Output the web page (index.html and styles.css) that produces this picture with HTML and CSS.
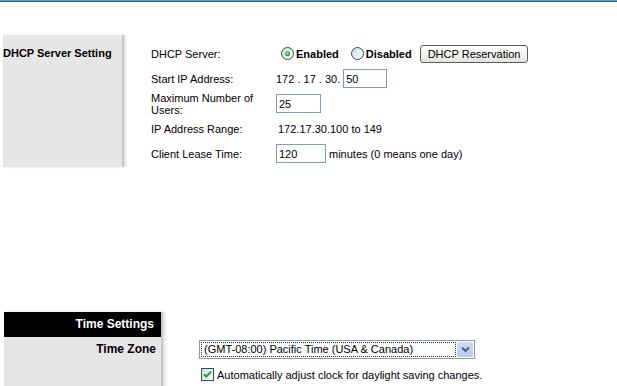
FILE: index.html
```html
<!DOCTYPE html>
<html lang="en">
<head>
    <meta charset="UTF-8">
    <title>Basic Setup</title>
    <link rel="stylesheet" href="styles.css">
</head>
<body>

    <div class="topline"></div>

    <!-- DHCP block -->
    <div class="dhcp">
        <div class="dhcp-title">DHCP Server Setting</div>

        <div class="dhcp-fields">
            <div class="field-label">DHCP Server:</div>
            <div class="field-value">
                <label class="radio first">
                    <svg width="13" height="13" viewBox="0 0 13 13">
                        <defs>
                            <linearGradient id="rbg" x1="0" y1="0" x2="1" y2="1">
                                <stop offset="0" stop-color="#d8d8d2"/>
                                <stop offset="1" stop-color="#ffffff"/>
                            </linearGradient>
                            <radialGradient id="dot" cx="0.4" cy="0.4" r="0.6">
                                <stop offset="0" stop-color="#9be69b"/>
                                <stop offset="1" stop-color="#21a121"/>
                            </radialGradient>
                        </defs>
                        <circle cx="6.5" cy="6.5" r="6" fill="url(#rbg)" stroke="#1c5180"/>
                        <circle cx="6.5" cy="6.5" r="2.6" fill="url(#dot)"/>
                    </svg>
                    Enabled
                </label>
                <label class="radio">
                    <svg width="13" height="13" viewBox="0 0 13 13">
                        <circle cx="6.5" cy="6.5" r="6" fill="url(#rbg)" stroke="#1c5180"/>
                    </svg>
                    Disabled
                </label>
                <button class="btn">DHCP Reservation</button>
            </div>

            <div class="field-label">Start IP Address:</div>
            <div class="field-value">
                <span class="ip-prefix">172 . 17 . 30.</span>
                <input class="text-input w-ip" type="text" value="50">
            </div>

            <div class="field-label">Maximum Number of Users:</div>
            <div class="field-value">
                <input class="text-input w-users" type="text" value="25">
            </div>

            <div class="field-label">IP Address Range:</div>
            <div class="field-value range">172.17.30.100 to 149</div>

            <div class="field-label">Client Lease Time:</div>
            <div class="field-value">
                <input class="text-input w-lease" type="text" value="120">
                <span class="unit">minutes (0 means one day)</span>
            </div>
        </div>
    </div>

    <!-- Time block -->
    <div class="time">
        <div class="time-side">
            <div class="time-head">Time Settings</div>
            <div class="time-label">Time Zone</div>
        </div>

        <div class="time-main">
            <div class="time-row">
                <div class="select-box">
                    <div class="select-value">(GMT-08:00) Pacific Time (USA &amp; Canada)</div>
                    <div class="select-arrow">
                        <svg width="9" height="7" viewBox="0 0 9 7">
                            <path d="M1 1.5 L4.5 5 L8 1.5" fill="none" stroke="#4d6185" stroke-width="2"/>
                        </svg>
                    </div>
                </div>
            </div>

            <label class="time-row check-row">
                <svg width="13" height="13" viewBox="0 0 13 13">
                    <rect x="0.5" y="0.5" width="12" height="12" fill="url(#rbg)" stroke="#1c5180"/>
                    <path d="M3 6.2 L5.3 8.6 L10 3.6" fill="none" stroke="#21a121" stroke-width="2"/>
                </svg>
                Automatically adjust clock for daylight saving changes.
            </label>
        </div>
    </div>

</body>
</html>
```

FILE: styles.css
```css
/* Page */
body {
    font-family: "Liberation Sans", Arial, sans-serif;
    font-size: 11px;
    color: #000;
    background-color: #fff;
    margin: 0;
    overflow: hidden;
}

.topline {
    height: 1px;
    border-top: 1px solid #5d9cbf;
    background-color: #2a6788;
}

/* DHCP block */
.dhcp {
    display: flex;
    margin-top: 33px;
}

.dhcp-title {
    width: 119px;
    margin-left: 3px;
    padding-top: 12px;
    background-color: #e6e6e6;
    border-right: 2px solid #c9c9c9;
    box-shadow: 2px 0 2px rgba(0, 0, 0, 0.12);
    font-weight: bold;
    line-height: 13px;
}

.dhcp-fields {
    display: grid;
    grid-template-columns: 125px auto;
    grid-auto-rows: 25px;
    align-items: center;
    padding: 6px 0 1px 27px;
}

.field-label {
    line-height: 12px;
}

.field-value {
    display: flex;
    align-items: center;
}

.radio {
    display: inline-flex;
    align-items: center;
    gap: 2px;
    font-weight: bold;
    margin-left: 12px;
}

.radio.first {
    margin-left: 5px;
}

.btn {
    height: 18px;
    margin-left: 8px;
    padding: 0 7px;
    font-family: "Liberation Sans", Arial, sans-serif;
    font-size: 11px;
    color: #000;
    border: 1px solid #5d5d5d;
    border-radius: 3px;
    background: linear-gradient(#ffffff, #e4e4de);
}

.text-input {
    height: 19px;
    box-sizing: border-box;
    border: 1px solid #7f9db9;
    padding: 0 2px;
    font-family: "Liberation Sans", Arial, sans-serif;
    font-size: 11px;
}

.ip-prefix {
    margin-right: 3px;
}

.w-ip { width: 44px; }
.w-users { width: 45px; }
.w-lease { width: 50px; }

.range {
    padding-left: 2px;
}

.unit {
    margin-left: 3px;
}

/* Time block */
.time {
    display: flex;
    margin-top: 145px;
}

.time-side {
    width: 157px;
    height: 80px;
    margin-left: 4px;
    background-color: #e6e6e6;
    border-right: 2px solid #c9c9c9;
    box-shadow: 2px 0 3px rgba(0, 0, 0, 0.15);
    font-size: 12px;
    font-weight: bold;
}

.time-head {
    height: 25px;
    line-height: 25px;
    padding-right: 7px;
    text-align: right;
    background-color: #000;
    color: #fff;
}

.time-label {
    height: 25px;
    line-height: 25px;
    padding-right: 5px;
    text-align: right;
}

.time-main {
    padding: 25px 0 0 36px;
}

.time-row {
    height: 25px;
    display: flex;
    align-items: center;
}

.select-box {
    display: flex;
    width: 276px;
    height: 19px;
    box-sizing: border-box;
    padding: 1px;
    border: 1px solid #7f9db9;
    background-color: #fff;
}

.select-value {
    flex: 1;
    margin-right: 1px;
    padding-left: 2px;
    line-height: 13px;
    border: 1px dotted #333;
}

.select-arrow {
    width: 16px;
    display: flex;
    align-items: center;
    justify-content: center;
    border-radius: 2px;
    background: linear-gradient(#cddcfc, #b4c9f7);
}

.check-row {
    gap: 3px;
    padding-left: 2px;
}
```
